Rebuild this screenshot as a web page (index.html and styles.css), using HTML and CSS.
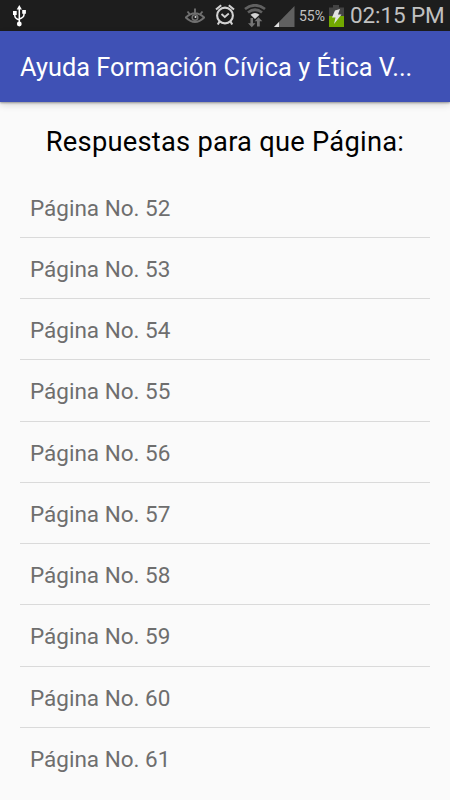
FILE: index.html
```html
<!DOCTYPE html>
<html lang="es">
<head>
<meta charset="utf-8">
<title>Ayuda Formación Cívica y Ética</title>
<link rel="stylesheet" href="styles.css">
</head>
<body>
<header class="status">
  <svg class="usb" width="16" height="26" viewBox="0 0 16 26" fill="none" stroke="#fff" stroke-width="1.500">
    <path d="M8.300 7v15M3.800 12v2.500q0 3 4.500 4.500M13 11v2.500q0 3-4.700 4.500"/>
    <path d="M8.300 4l2.600 4.500H5.700zM2 10h3.700v4H2zM11.200 9h3.700v3.800h-3.700z" fill="#fff" stroke="none"/>
    <circle cx="8.300" cy="23" r="2.400" fill="#fff" stroke="none"/>
  </svg>
  <div class="icons">
    <svg class="eye" width="20" height="16" viewBox="0 0 20 16" fill="none" stroke="#707070" stroke-width="1.900">
      <path d="M.8 9.500Q10 1 19.200 9.500Q10 18.500 .8 9.500zM2.500 3.500l2.500 3M10 .5v4M17.500 3.500l-2.500 3"/>
      <circle cx="10" cy="9.500" r="2.800" fill="#1d1d1d" stroke-width="1.500"/><circle cx="10.500" cy="9" r="1" fill="#ddd" stroke="none"/>
    </svg>
    <svg class="alarm" width="20" height="22" viewBox="0 0 20 22" fill="none" stroke="#d2d2d2" stroke-width="2.100">
      <circle cx="10" cy="11.500" r="7.900"/><path d="M6.500 10l3.300 3 4-3.500" stroke-width="1.800"/>
      <path d="M1 5.500L6.200 1.200M13.800 1.200L19 5.500M4.500 17.500L2.800 20.500M15.500 17.500l1.700 3"/>
    </svg>
    <svg class="wifi" width="22" height="24" viewBox="0 0 22 24">
      <g fill="none" stroke="#616161" stroke-width="2.700"><path d="M1 5Q11-2.500 21 5"/><path d="M4 8.500Q11 3 18 8.500"/></g>
      <path d="M6.500 10.800Q11 7 15.500 10.800L11 15z" fill="#d2d2d2"/>
      <path d="M6.500 14h2.500v5.200h2.500L7.800 23.300 4 19.200h2.500zM13 22.500v-5.200h-2.300L14.500 13.200l3.800 4.100h-2.500v5.200z" fill="#747474"/>
    </svg>
    <svg class="signal" width="21" height="21" viewBox="0 0 21 21"><path d="M20.500 0v21H0z" fill="#606060"/><path d="M5 16v5H0z" fill="#e0e0e0"/></svg>
    <span class="percent">55%</span>
    <svg class="battery" width="17" height="22" viewBox="0 0 17 22">
      <path d="M5 0h6v2.500h5V11H1V2.500h4z" fill="#444"/><path d="M1 11h15v11H1z" fill="#72a800"/>
      <path d="M7 5.500L12 4 10 9.500h3.500L6 19l1.500-6.500H4z" fill="#e2e2e2"/>
    </svg>
    <span class="clock">02:15 PM</span>
  </div>
</header>
<div class="appbar"><h1>Ayuda Formación Cívica y Ética V...</h1></div>
<main>
  <h2>Respuestas para que Página:</h2>
  <ul>
    <li>Página No. 52</li>
    <li>Página No. 53</li>
    <li>Página No. 54</li>
    <li>Página No. 55</li>
    <li>Página No. 56</li>
    <li>Página No. 57</li>
    <li>Página No. 58</li>
    <li>Página No. 59</li>
    <li>Página No. 60</li>
    <li>Página No. 61</li>
  </ul>
</main>
</body>
</html>
```
FILE: styles.css
```css
* { box-sizing: border-box; margin: 0; padding: 0; }
body {
  width: 450px;
  height: 800px;
  overflow: hidden;
  background: #fafafa;
  font-family: Roboto, sans-serif;
}
svg { display: block; flex: none; }
.status {
  display: flex;
  justify-content: space-between;
  align-items: flex-start;
  height: 31px;
  padding: 0 6px 0 11px;
  background: #1d1d1d;
}
.usb { margin-top: 1px; }
.icons { display: flex; align-items: flex-start; color: #c1c1c1; }
.eye { margin: 8px 10px 0 0; }
.alarm { margin: 4px 9px 0 0; }
.wifi { margin: 4px 8px 0 0; }
.signal { margin: 6px 4px 0 0; }
.percent { width: 28px; font-size: 14px; line-height: 32px; white-space: nowrap; }
.battery { margin: 5px 5px 0 1px; }
.clock { width: 94px; font-size: 22.5px; line-height: 31px; letter-spacing: -.1px; white-space: nowrap; }
.appbar {
  position: relative;
  height: 70.5px;
  padding-left: 20px;
  background: #3f51b5;
  box-shadow: 0 1px 2px rgba(0, 0, 0, .35), 0 3px 7px rgba(0, 0, 0, .14);
}
h1 { font-size: 25.3px; font-weight: 400; line-height: 73px; letter-spacing: .04px; color: #fff; white-space: nowrap; }
main { padding: 0 20px; }
h2 {
  height: 75.1px;
  padding-top: 1px;
  font-size: 27.3px;
  letter-spacing: .25px;
  font-weight: 400;
  line-height: 79px;
  text-align: center;
  color: #000;
  white-space: nowrap;
}
ul { list-style: none; }
li {
  height: 61.25px;
  padding-left: 10px;
  border-bottom: 1px solid #dadada;
  font-size: 22.5px;
  line-height: 63px;
  color: #6e6e6e;
}
li:last-child { border-bottom: 0; }
```
